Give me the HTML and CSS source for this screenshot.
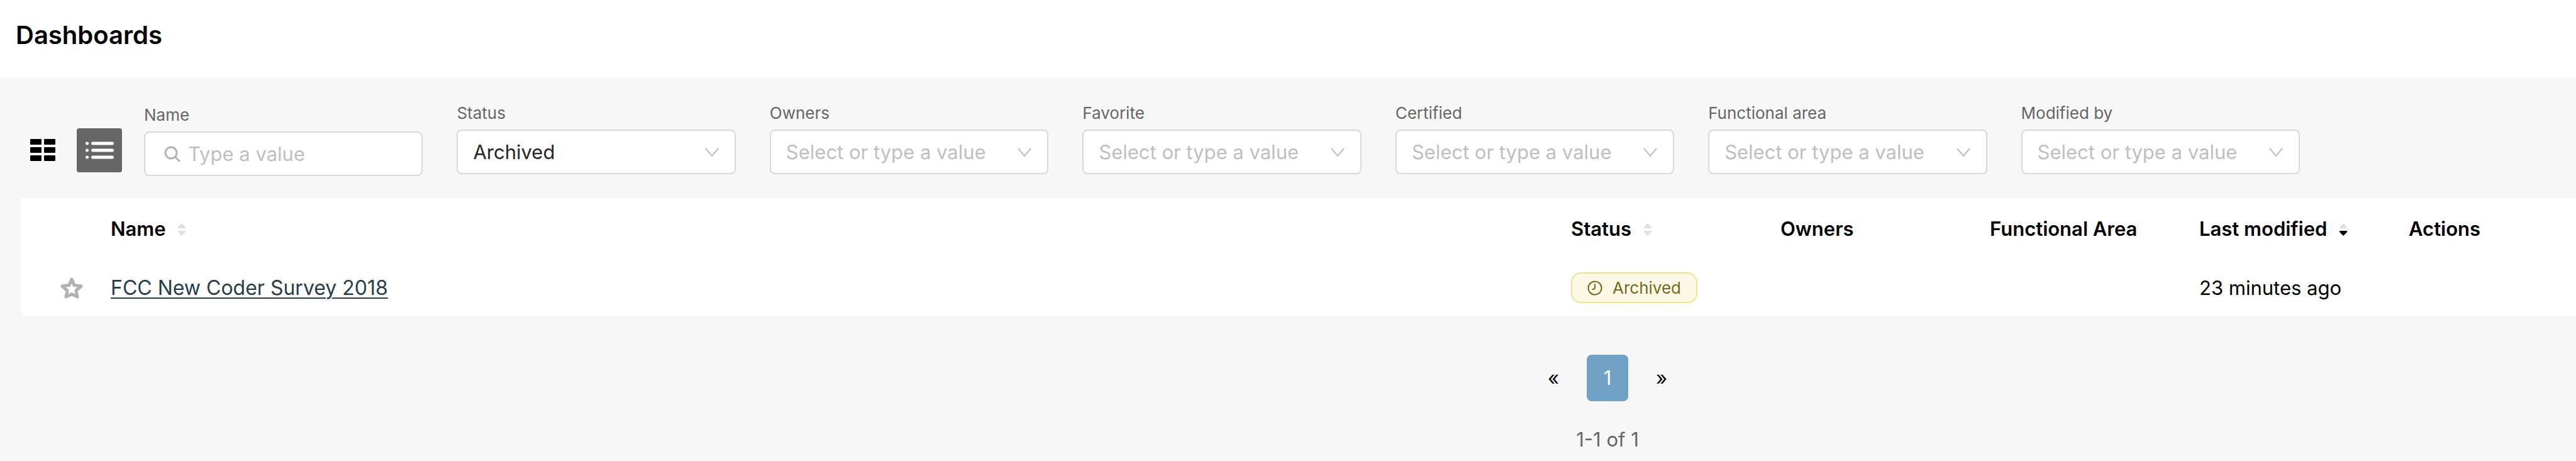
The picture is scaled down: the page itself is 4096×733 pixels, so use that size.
FILE: index.html
```html
<!DOCTYPE html>
<html lang="en">
<head>
    <meta charset="UTF-8">
    <meta name="viewport" content="width=device-width, initial-scale=1.0">
    <title>Dashboards</title>
    <link rel="stylesheet" href="styles.css">
</head>
<body>
    <header class="page-header">
        <h1>Dashboards</h1>
    </header>
    <main>
        <div class="controls">
            <div class="view-toggle">
                <button type="button" class="toggle" aria-label="Card view">
                    <svg width="42" height="36" viewBox="0 0 42 36" fill="#000">
                        <rect x="1" y="0" width="18" height="9" rx="1"/>
                        <rect x="23" y="0" width="18" height="9" rx="1"/>
                        <rect x="1" y="13" width="18" height="9" rx="1"/>
                        <rect x="23" y="13" width="18" height="9" rx="1"/>
                        <rect x="1" y="26" width="18" height="9" rx="1"/>
                        <rect x="23" y="26" width="18" height="9" rx="1"/>
                    </svg>
                </button>
                <button type="button" class="toggle active" aria-label="List view">
                    <svg width="46" height="28" viewBox="0 0 46 28" fill="#fff">
                        <circle cx="3.500" cy="3" r="2.500"/>
                        <circle cx="3.500" cy="14" r="2.500"/>
                        <circle cx="3.500" cy="25" r="2.500"/>
                        <rect x="10" y="0.500" width="36" height="5" rx="2.500"/>
                        <rect x="10" y="11.500" width="36" height="5" rx="2.500"/>
                        <rect x="10" y="22.500" width="36" height="5" rx="2.500"/>
                    </svg>
                </button>
            </div>
            <div class="filters">
                <div class="filter search">
                    <label for="name">Name</label>
                    <div class="field">
                        <svg width="26" height="26" viewBox="0 0 26 26" fill="none" stroke="#b2b2b2" stroke-width="3" stroke-linecap="round">
                            <circle cx="11" cy="11" r="9"/>
                            <path d="M18 18l6 6"/>
                        </svg>
                        <input type="text" id="name" placeholder="Type a value">
                    </div>
                </div>
                <div class="filter">
                    <label for="status">Status</label>
                    <div class="field">
                        <select id="status" class="chosen"><option>Archived</option></select>
                        <svg class="arrow" width="24" height="16" viewBox="0 0 24 16"><path d="M2 2l10 12L22 2"/></svg>
                    </div>
                </div>
                <div class="filter">
                    <label for="owners">Owners</label>
                    <div class="field">
                        <select id="owners"><option>Select or type a value</option></select>
                        <svg class="arrow" width="24" height="16" viewBox="0 0 24 16"><path d="M2 2l10 12L22 2"/></svg>
                    </div>
                </div>
                <div class="filter">
                    <label for="favorite">Favorite</label>
                    <div class="field">
                        <select id="favorite"><option>Select or type a value</option></select>
                        <svg class="arrow" width="24" height="16" viewBox="0 0 24 16"><path d="M2 2l10 12L22 2"/></svg>
                    </div>
                </div>
                <div class="filter">
                    <label for="certified">Certified</label>
                    <div class="field">
                        <select id="certified"><option>Select or type a value</option></select>
                        <svg class="arrow" width="24" height="16" viewBox="0 0 24 16"><path d="M2 2l10 12L22 2"/></svg>
                    </div>
                </div>
                <div class="filter">
                    <label for="area">Functional area</label>
                    <div class="field">
                        <select id="area"><option>Select or type a value</option></select>
                        <svg class="arrow" width="24" height="16" viewBox="0 0 24 16"><path d="M2 2l10 12L22 2"/></svg>
                    </div>
                </div>
                <div class="filter">
                    <label for="modified">Modified by</label>
                    <div class="field">
                        <select id="modified"><option>Select or type a value</option></select>
                        <svg class="arrow" width="24" height="16" viewBox="0 0 24 16"><path d="M2 2l10 12L22 2"/></svg>
                    </div>
                </div>
            </div>
        </div>

        <table class="dashboards">
            <colgroup>
                <col class="col-star">
                <col>
                <col class="col-data">
                <col class="col-data">
                <col class="col-data">
                <col class="col-data">
                <col class="col-actions">
            </colgroup>
            <thead>
                <tr>
                    <th></th>
                    <th>Name <svg class="sort" width="12" height="20" viewBox="0 0 12 20"><path d="M6 0l5 5q1 1 1 2v1H0V7q0-1 1-2z"/><path d="M6 20l5-5q1-1 1-2v-1H0v1q0 1 1 2z"/></svg></th>
                    <th>Status <svg class="sort" width="12" height="20" viewBox="0 0 12 20"><path d="M6 0l5 5q1 1 1 2v1H0V7q0-1 1-2z"/><path d="M6 20l5-5q1-1 1-2v-1H0v1q0 1 1 2z"/></svg></th>
                    <th>Owners</th>
                    <th>Functional Area</th>
                    <th>Last modified <svg class="sort desc" width="12" height="20" viewBox="0 0 12 20"><path d="M6 0l5 5q1 1 1 2v1H0V7q0-1 1-2z"/><path d="M6 20l5-5q1-1 1-2v-1H0v1q0 1 1 2z"/></svg></th>
                    <th>Actions</th>
                </tr>
            </thead>
            <tbody>
                <tr>
                    <td class="star">
                        <button type="button" aria-label="Favorite">
                            <svg width="36" height="34" viewBox="0 0 36 34" fill="none" stroke="#b2b2b2" stroke-width="5" stroke-linejoin="round"><path d="M18 3l4 9.500 11 1.500-8 7 2 10-9-4.500L9 31l2-10-8-7 11-1.500z"/></svg>
                        </button>
                    </td>
                    <td><a href="#">FCC New Coder Survey 2018</a></td>
                    <td>
                        <span class="badge">
                            <svg width="24" height="24" viewBox="0 0 24 24" fill="none" stroke="#75691f" stroke-width="2" stroke-linecap="round"><circle cx="12" cy="12" r="10.500"/><path d="M12 6v5q0 3-4 3"/></svg>
                            Archived
                        </span>
                    </td>
                    <td></td>
                    <td></td>
                    <td>23 minutes ago</td>
                    <td></td>
                </tr>
            </tbody>
        </table>

        <div class="pagination">
            <nav class="pages">
                <button type="button">«</button>
                <button type="button" class="current">1</button>
                <button type="button">»</button>
            </nav>
            <p>1-1 of 1</p>
        </div>
    </main>
</body>
</html>
```
FILE: styles.css
```css
* {
    box-sizing: border-box;
}
body {
    margin: 0;
    font-family: Inter, sans-serif;
    font-size: 31px;
    line-height: 40px;
    color: #000;
    background-color: #f7f7f7;
}
button, input, select {
    font: inherit;
    color: inherit;
}
button {
    border: 0;
    padding: 0;
    background: none;
}
svg {
    flex: none;
}
.page-header {
    height: 122px;
    padding: 32px 25px;
    background-color: #fff;
}
h1 {
    margin: 0;
    font-size: 40px;
    line-height: 48px;
    font-weight: 600;
}
.controls {
    display: flex;
    padding: 40px 439px 35px 32px;
}
.view-toggle {
    display: flex;
    gap: 18px;
    padding-top: 42px;
    margin-right: 35px;
}
.toggle {
    display: flex;
    align-items: center;
    justify-content: center;
    width: 72px;
    height: 70px;
    border-radius: 4px;
}
.toggle.active {
    background-color: #666;
}
.filters {
    flex: 1;
    display: grid;
    grid-template-columns: repeat(7, minmax(0, 1fr));
    gap: 54px;
}
.filter label {
    display: block;
    margin-bottom: 8px;
    font-size: 26px;
    line-height: 36px;
    color: #666;
}
.search {
    padding-top: 3px;
}
.field {
    display: flex;
    align-items: center;
    height: 71px;
    padding: 0 24px;
    border: 2px solid #d9d9d9;
    border-radius: 8px;
    background-color: #fff;
}
.search .field {
    padding-left: 30px;
    gap: 12px;
}
.field input, .field select {
    flex: 1;
    min-width: 0;
    padding: 0;
    border: 0;
    outline: 0;
    background: none;
    appearance: none;
    color: #bfbfbf;
}
.field input::placeholder {
    color: #bfbfbf;
}
.field select.chosen {
    color: #262626;
}
.arrow {
    fill: none;
    stroke: #bfbfbf;
    stroke-width: 2;
}
.dashboards {
    width: calc(100% - 34px);
    margin-left: 34px;
    table-layout: fixed;
    border-collapse: collapse;
    background-color: #fff;
    border-radius: 0 0 0 8px;
}
.col-star {
    width: 126px;
}
.col-data {
    width: 333px;
}
.col-actions {
    width: 282px;
}
th, td {
    padding: 0 16px;
    text-align: left;
}
th {
    height: 98px;
    font-weight: 600;
}
td {
    height: 89px;
}
.sort {
    margin-left: 12px;
    fill: #e0e0e0;
}
.desc path:last-child {
    fill: #000;
}
.star {
    padding-left: 62px;
}
.star button {
    display: flex;
}
a {
    color: #273d4a;
    font-size: 32px;
    text-underline-offset: 4px;
    text-decoration-thickness: 2px;
}
.badge {
    display: flex;
    align-items: center;
    gap: 16px;
    width: max-content;
    height: 49px;
    padding: 0 24px;
    border: 2px solid #f0e38c;
    border-radius: 16px;
    background-color: #fbf9e6;
    color: #75691f;
    font-size: 26px;
}
.pagination {
    padding: 62px 0 12px 1016px;
    text-align: center;
}
.pages {
    display: flex;
    justify-content: center;
    gap: 20px;
}
.pages button {
    width: 66px;
    height: 74px;
    border-radius: 8px;
}
.pages .current {
    background-color: #71a1c5;
    color: #fff;
}
.pagination p {
    margin: 41px 0 0;
    color: #666;
}
```
